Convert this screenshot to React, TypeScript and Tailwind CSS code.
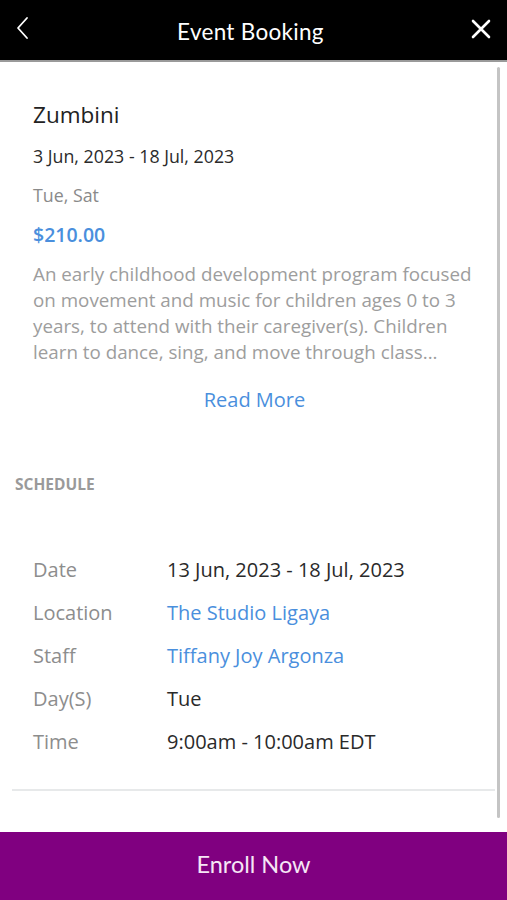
import React from 'react';

const rows: { label: string; value: string; link?: boolean }[] = [
  { label: 'Date', value: '13 Jun, 2023 - 18 Jul, 2023' },
  { label: 'Location', value: 'The Studio Ligaya', link: true },
  { label: 'Staff', value: 'Tiffany Joy Argonza', link: true },
  { label: 'Day(S)', value: 'Tue' },
  { label: 'Time', value: '9:00am - 10:00am EDT' },
];

export default function App() {
  return (
    <div className="w-[507px] h-[900px] bg-white flex flex-col overflow-hidden font-['Open_Sans',sans-serif]">
      {/* header */}
      <div className="h-[62px] bg-black border-b-2 border-[#9a9a9a] flex items-center justify-between px-[14px] shrink-0">
        <svg width="16" height="24" viewBox="0 0 16 24" className="ml-[1px] mt-[-4px]">
          <path d="M12 2 L3 12 L12 22" fill="none" stroke="#fff" strokeWidth="1.8" strokeLinecap="round" strokeLinejoin="round" />
        </svg>
        <h1 className="text-white text-[22.5px] leading-[30px] mt-[3px] font-['Lato',sans-serif] tracking-[0.3px]">Event Booking</h1>
        <svg width="22" height="22" viewBox="0 0 22 22" className="mr-[1px] mt-[-3px]">
          <path d="M3 3 L19 19 M19 3 L3 19" fill="none" stroke="#fff" strokeWidth="2.6" strokeLinecap="round" />
        </svg>
      </div>

      {/* scroll area */}
      <div className="flex-1 flex">
        <div className="flex-1 flex flex-col">
          <div className="pl-[33px] pt-[38px]">
            <h2 className="text-[22.5px] leading-[30px] text-[#222]">Zumbini</h2>
            <p className="mt-[15px] text-[17.8px] leading-[22px] text-[#2b2b2b]">3 Jun, 2023 - 18 Jul, 2023</p>
            <p className="mt-[17px] text-[17.8px] leading-[22px] text-[#8a8a8a]">Tue, Sat</p>
            <p className="mt-[17px] text-[19.5px] leading-[24px] font-semibold text-[#4a8fdd]">$210.00</p>
            <p className="mt-[14px] w-[446px] text-[18.8px] leading-[26px] text-[#9d9d9d]">
              An early childhood development program focused on movement and music for children ages 0 to 3 years, to attend with their caregiver(s). Children learn to dance, sing, and move through class...
            </p>
            <p className="mt-[22px] text-center text-[20px] leading-[26px] text-[#4a8fdd] pr-[21px]">Read More</p>
          </div>

          <p className="mt-[62px] ml-[15px] text-[15.5px] leading-[18px] font-bold text-[#9a9a9a]">SCHEDULE</p>

          <div className="mt-[64px] pl-[33px] flex flex-col gap-[18px]">
            {rows.map(r => (
              <div key={r.label} className="flex text-[20px] leading-[25px]">
                <span className="w-[134px] text-[#8d8d8d]">{r.label}</span>
                <span className={r.link ? 'text-[#4a8fdd]' : 'text-[#2a2a2a]'}>{r.value}</span>
              </div>
            ))}
          </div>

          <div className="mt-[35px] ml-[12px] mr-[2px] h-[2px] bg-[#e7e9ea]" />
        </div>
        <div className="w-[10px] pt-[5px] pb-[14px] flex justify-start">
          <div className="w-[3px] h-full bg-[#c4c4c4] rounded-full" />
        </div>
      </div>

      {/* footer */}
      <button className="h-[68px] shrink-0 bg-[#800080] text-[#f6e6f6] text-[23.5px] font-['Lato',sans-serif] pb-[2px]">
        Enroll Now
      </button>
    </div>
  );
}
